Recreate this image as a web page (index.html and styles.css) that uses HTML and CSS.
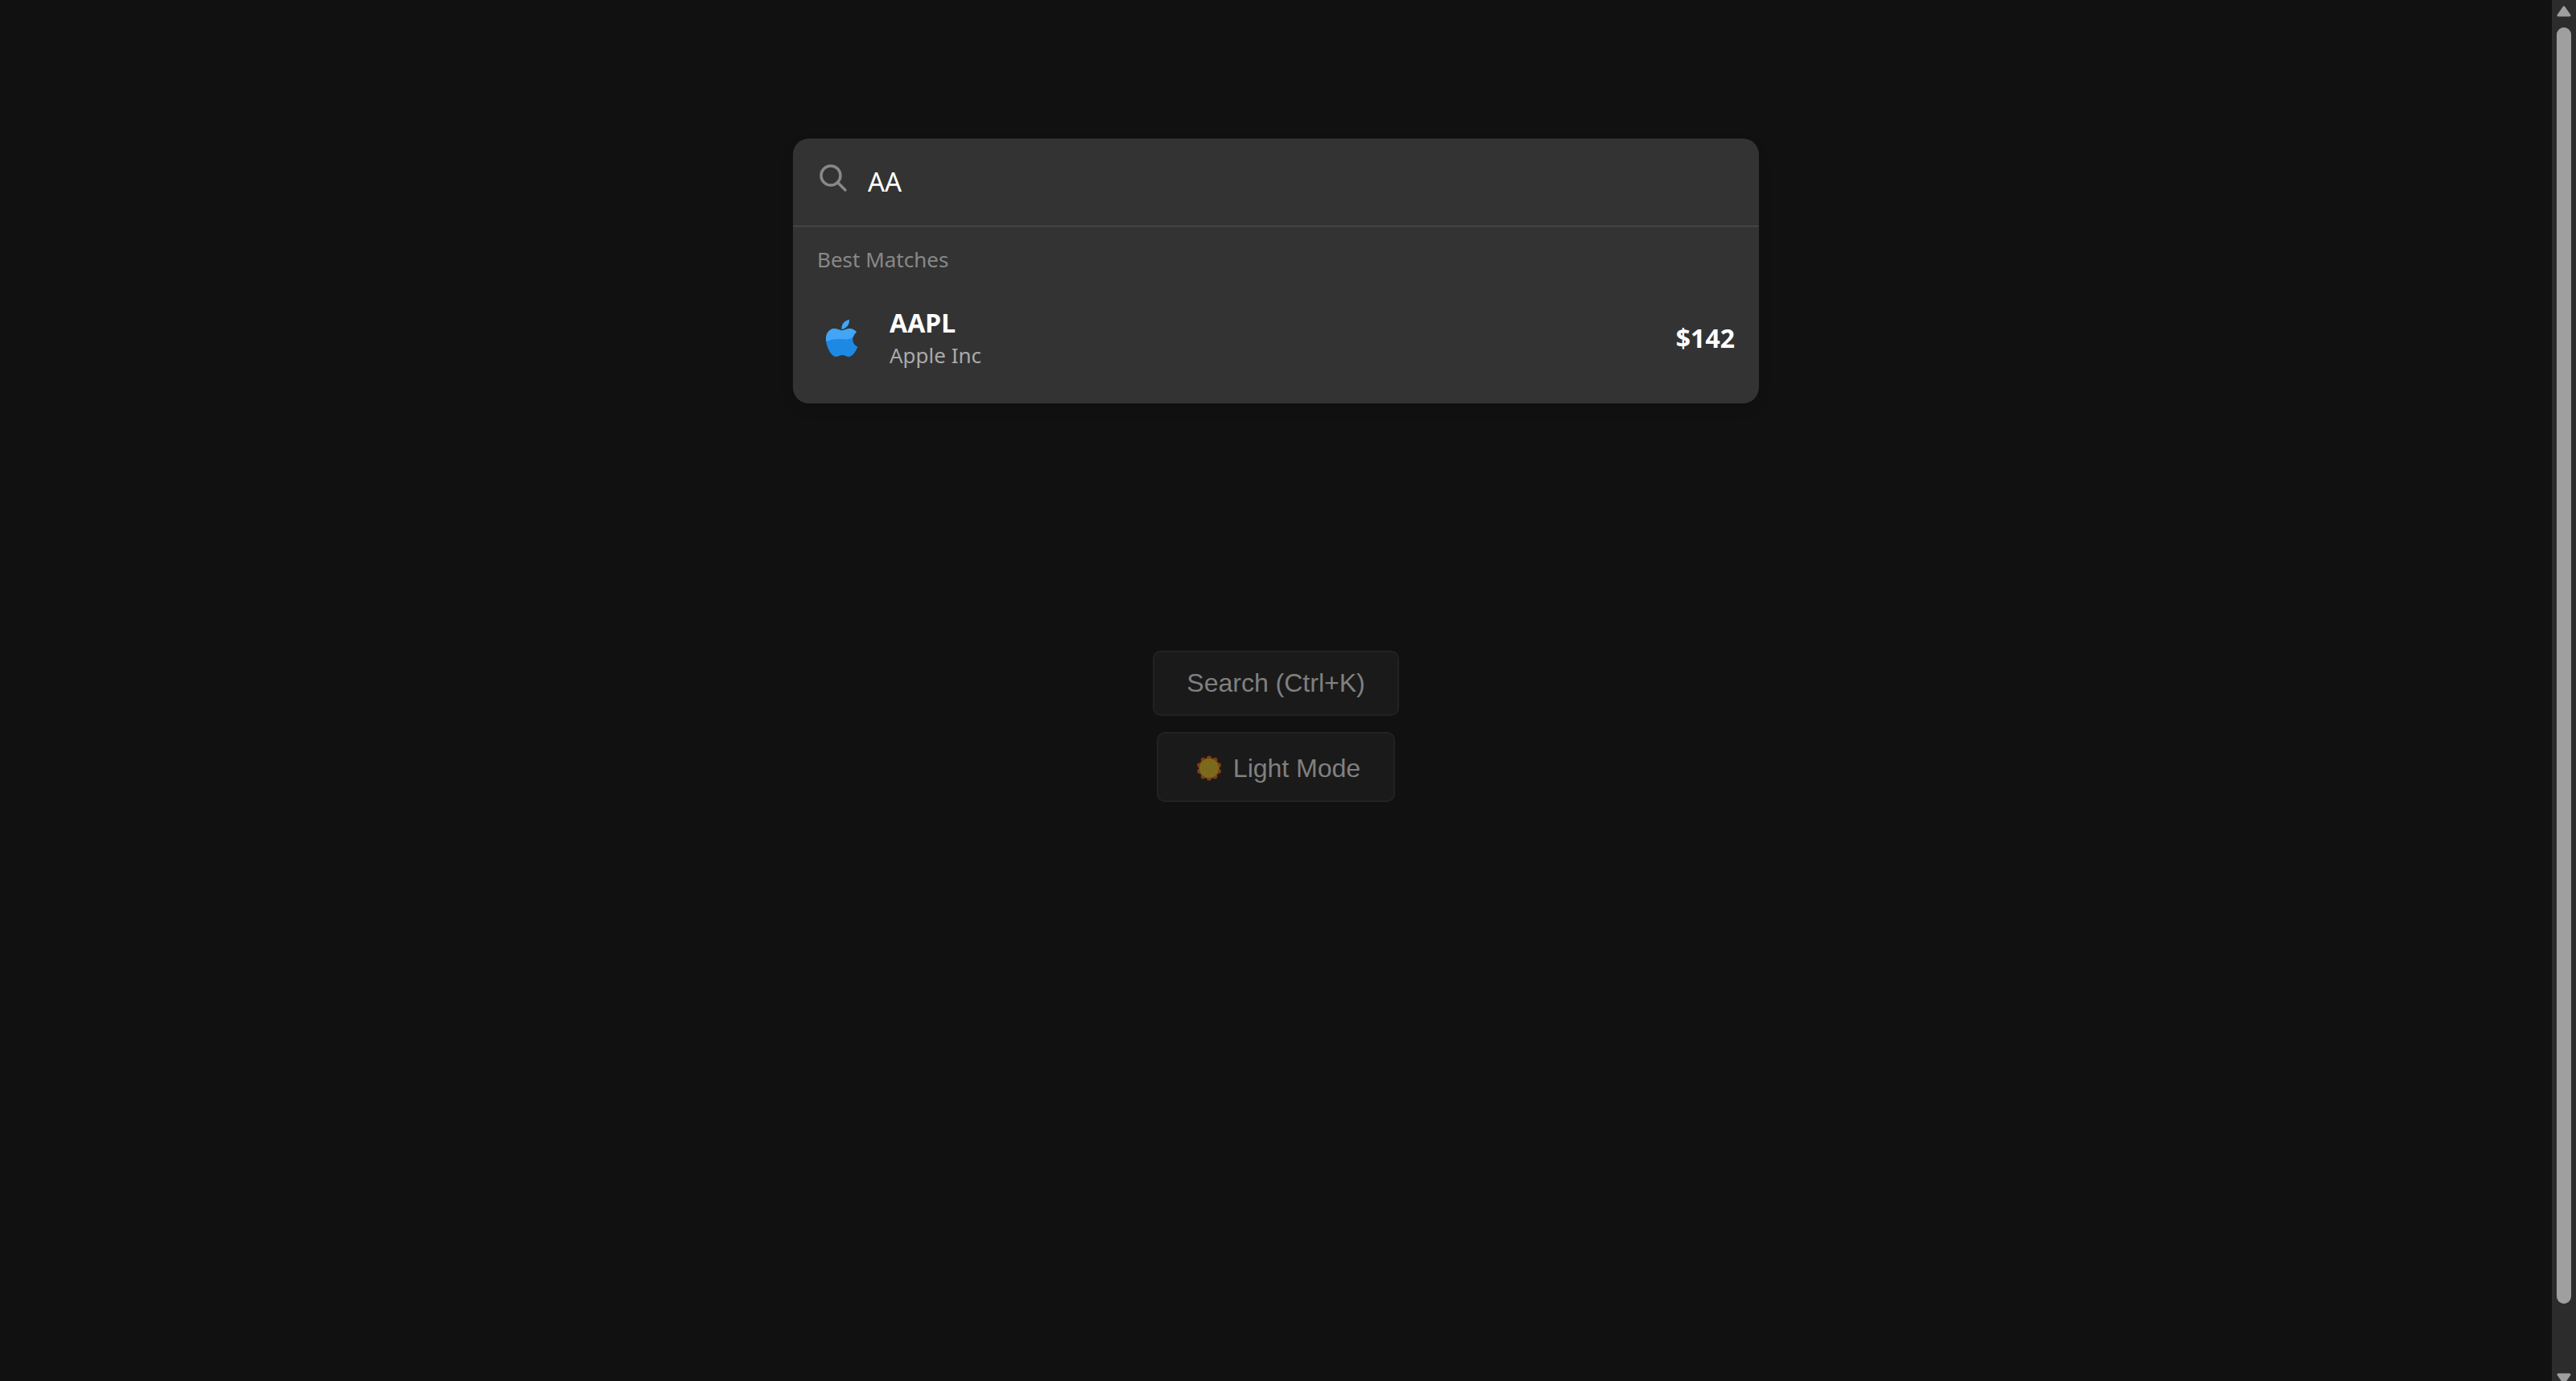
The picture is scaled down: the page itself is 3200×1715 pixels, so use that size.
FILE: index.html
```html
<!DOCTYPE html>
<html lang="en">
<head>
<meta charset="utf-8">
<title>Stock Search</title>
<link rel="stylesheet" href="styles.css">
</head>
<body>
<main class="page">
  <section class="palette" role="dialog" aria-label="Search">
    <div class="search">
      <label class="search-label" for="query">
        <svg class="search-icon" viewBox="0 0 36 36" role="img" aria-label="Search"><circle cx="14" cy="14" r="12"/><path d="M22.500 22.500L32 32"/></svg>
      </label>
      <input class="search-input" id="query" type="text" value="AA" autocomplete="off" spellcheck="false">
    </div>
    <div class="results">
      <h2 class="heading">Best Matches</h2>
      <a class="match" href="#aapl">
        <svg class="logo" viewBox="0 0 40 46" aria-hidden="true">
          <path class="logo-top" d="M19.500 12C19 5.500 23 1 29 0C29.500 6 25.500 11 19.500 12Z"/>
          <path class="logo-base" d="M38 15.500C36 12.500 32.500 11 29.500 11C25.500 11 22.500 13.500 20 13.500C17.500 13.500 14.500 11 10.500 11C4.500 11 0 16.500 0 24C0 33 6.500 46 12.500 46C15.500 46 17 44 20.500 44C24 44 25 46 28.500 46C33 46 37.500 39 39.500 33.500C32.500 31.500 31 20.500 38 15.500Z"/>
          <path class="logo-top" d="M0.300 27C0 26 0 25 0 24C0 16.500 4.500 11 10.500 11C14.500 11 17.500 13.500 20 13.500C22.500 13.500 25.500 11 29.500 11C32.500 11 36 12.500 38 15.500C35.500 17.500 34.500 19.500 34 21.500C28 26 23 24 16 24C10 24 5 25 0.300 27Z"/>
        </svg>
        <span class="company">
          <strong class="symbol">AAPL</strong>
          <span class="name">Apple Inc</span>
        </span>
        <strong class="price">$142</strong>
      </a>
    </div>
  </section>
  <div class="actions">
    <button class="action" type="button">Search (Ctrl+K)</button>
    <button class="action action-mode" type="button">
      <svg class="sun" viewBox="0 0 32 32" aria-hidden="true"><circle class="sun-rim" cx="16" cy="16" r="13"/><circle class="sun-rays" cx="16" cy="16" r="12.500" pathLength="10" transform="rotate(-90 16 16)"/><circle class="sun-core" cx="16" cy="16" r="12"/></svg>
      Light Mode
    </button>
  </div>
</main>
<div class="scrollbar" aria-hidden="true">
  <svg class="arrow" viewBox="0 0 18 14"><path d="M9 2L16 12H2Z"/></svg>
  <div class="thumb"></div>
  <svg class="arrow arrow-down" viewBox="0 0 18 14"><path d="M2 2H16L9 12Z"/></svg>
</div>
</body>
</html>
```

FILE: styles.css
```css
* { box-sizing: border-box; }

body {
  margin: 0;
  height: 100vh;
  display: flex;
  background: #111;
  color: #fff;
  font-family: "Segoe UI", "Noto Sans", sans-serif;
}

.page {
  flex: 1;
  display: flex;
  flex-direction: column;
  align-items: center;
  padding: 10vh 32px 0;
}

.palette {
  width: 100%;
  max-width: 1200px;
  border-radius: 20px;
  background: #333;
  box-shadow: 0 8px 16px rgba(0, 0, 0, 0.1);
  overflow: hidden;
}

.search {
  display: flex;
  align-items: center;
  height: 110px;
  padding: 0 30px;
  border-bottom: 2px solid #444;
}

.search-label { display: flex; padding-bottom: 8px; }

.search-icon {
  width: 36px;
  height: 36px;
  margin-left: 3px;
  fill: none;
  stroke: #888;
  stroke-width: 3.5;
  stroke-linecap: round;
}

.search-input {
  flex: 1;
  min-width: 0;
  height: 52px;
  margin-left: 24px;
  padding: 0;
  border: 0;
  outline: 0;
  background: transparent;
  color: #fff;
  font: 33px "Segoe UI", "Noto Sans", sans-serif;
}

.results { padding: 20px 30px; }

.heading {
  margin: 0;
  color: #888;
  font-size: 26px;
  font-weight: 400;
  line-height: 40px;
}

.match {
  display: flex;
  align-items: center;
  padding: 38px 0 20px;
  color: #fff;
  text-decoration: none;
}

.logo { width: 40px; height: 46px; margin-left: 11px; }
.logo-top { fill: #42a5f5; }
.logo-base { fill: #1e88e5; }

.company {
  flex: 1;
  display: flex;
  flex-direction: column;
  margin-left: 39px;
}

.symbol, .price { font-size: 32px; font-weight: 700; line-height: 42px; }
.name { color: #aaa; font-size: 26px; line-height: 39px; }

.actions {
  display: flex;
  flex-direction: column;
  align-items: center;
  gap: 20px;
  margin-top: 307px;
}

.action {
  display: flex;
  align-items: center;
  height: 81px;
  padding: 0 40px;
  border: 2px solid #222;
  border-radius: 10px;
  background: #1a1a1a;
  color: #808080;
  font: 32px "Liberation Sans", Arial, sans-serif;
}

.action-mode { height: 87px; gap: 14px; padding: 4px 41px 0 47px; }

.sun { width: 32px; height: 32px; }
.sun-rim { fill: #803c14; }
.sun-rays {
  fill: none;
  stroke: #803c14;
  stroke-width: 6;
  stroke-linecap: round;
  stroke-dasharray: 0 1;
}
.sun-core { fill: #7c6a1c; }

.scrollbar {
  display: flex;
  flex-direction: column;
  align-items: center;
  width: 30px;
  height: 100vh;
  padding-top: 7px;
  background: #2c2c2c;
  overflow: hidden;
}

.arrow {
  flex: none;
  width: 18px;
  height: 14px;
  fill: #9f9f9f;
  stroke: #9f9f9f;
  stroke-width: 3;
  stroke-linejoin: round;
}

.arrow-down { margin-bottom: -4px; }

.thumb {
  flex: 1;
  width: 18px;
  margin: 13px 0 86px;
  border-radius: 9px;
  background: #9f9f9f;
}
```
